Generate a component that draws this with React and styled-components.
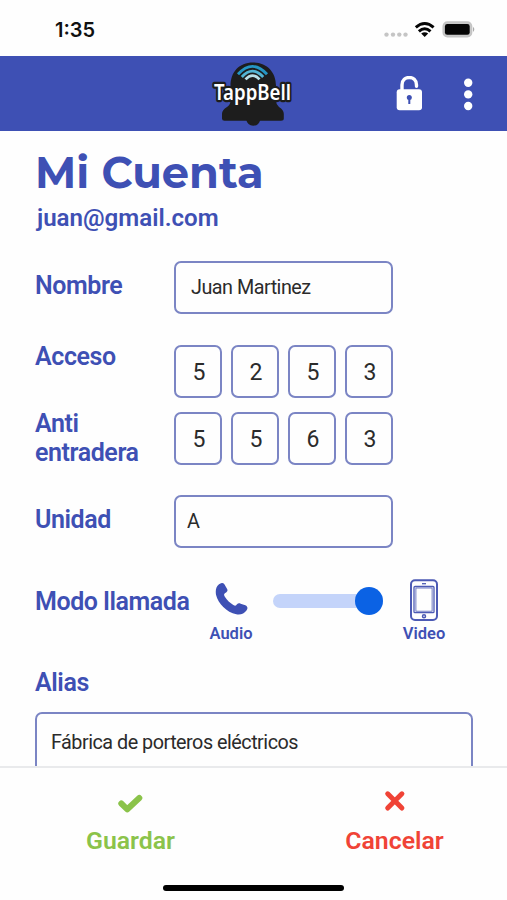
import React from "react";
import styled, { createGlobalStyle } from "styled-components";

const GlobalStyle = createGlobalStyle`
  * {
    box-sizing: border-box;
  }
  :root {
    --main-blue: #3e50b4;
    --border-blue: #7b85c4;
    --green: #8bc34a;
    --red: #f04336;
  }
  body {
    margin: 0;
    background: #fff;
    font-family: Roboto, "Liberation Sans", sans-serif;
  }
  h1, p {
    margin: 0;
  }
`;

const Screen = styled.div`
  width: 507px;
  height: 900px;
  display: flex;
  flex-direction: column;
  overflow: hidden;
  background: #fefefe;
`;
const StatusBar = styled.div`
  height: 56px;
  flex-shrink: 0;
  padding: 4px 31px 0 55px;
  display: flex;
  align-items: center;
  justify-content: space-between;
`;
const Time = styled.span`
  font-family: Inter, sans-serif;
  font-size: 20px;
  font-weight: 600;
  color: #111;
`;
const Header = styled.header`
  height: 75px;
  flex-shrink: 0;
  padding: 0 29px 0 205px;
  display: flex;
  align-items: center;
  background: var(--main-blue);
`;
const HeaderButtons = styled.div`
  margin-left: auto;
  display: flex;
  align-items: center;
  gap: 36px;
`;
const IconButton = styled.button`
  padding: 0;
  border: 0;
  background: none;
  display: flex;
`;
const Content = styled.main`
  flex: 1;
  min-height: 0;
  overflow: hidden;
  padding: 17px 34px 0 35px;
`;
const Title = styled.h1`
  height: 50px;
  line-height: 50px;
  font-family: Montserrat, Inter, sans-serif;
  font-size: 43.2px;
  font-weight: 700;
  color: var(--main-blue);
`;
const Email = styled.p`
  height: 28px;
  margin: 6px 0 29px 2px;
  line-height: 29px;
  font-size: 24.1px;
  font-weight: 600;
  color: var(--main-blue);
`;
const Row = styled.div`
  display: grid;
  grid-template-columns: 139px 219px;
  height: 53px;
  margin-bottom: ${({ $gap }) => $gap}px;
`;
const Label = styled.label`
  display: block;
  margin-top: ${({ $top }) => $top || 0}px;
  line-height: 29px;
  font-size: 25px;
  font-weight: 600;
  letter-spacing: -0.42px;
  white-space: nowrap;
  color: var(--main-blue);
`;
const Input = styled.input`
  width: 100%;
  height: 53px;
  padding: 0 ${({ $pad }) => $pad}px;
  border: 2px solid var(--border-blue);
  border-radius: 7px;
  background: #fefefe;
  outline: none;
  font-family: inherit;
  font-size: 19.8px;
  letter-spacing: -0.5px;
  color: #2b2b2b;
`;
const Digits = styled.div`
  display: flex;
  gap: 9px;
`;
const Digit = styled.input`
  width: 48px;
  height: 53px;
  padding: 2px 0 0 2px;
  border: 2px solid var(--border-blue);
  border-radius: 7px;
  background: #fefefe;
  outline: none;
  font-family: inherit;
  font-size: 23px;
  text-align: center;
  color: #2b2b2b;
`;
const CallMode = styled.div`
  display: flex;
  height: 68px;
  padding-top: 1px;
  margin-bottom: 24px;
`;
const ModeLabel = styled(Label)`
  width: 169px;
`;
const Mode = styled.div`
  width: 54px;
  display: flex;
  flex-direction: column;
  align-items: center;
  justify-content: space-between;
`;
const ModeName = styled.span`
  line-height: 20px;
  font-size: 16.5px;
  font-weight: 600;
  color: var(--main-blue);
`;
const ModeIcon = styled.div`
  height: 46px;
  display: flex;
  align-items: center;
`;
const Track = styled.div`
  width: 110px;
  height: 14px;
  margin: 17px 14px 0 15px;
  border-radius: 7px;
  background: #c4d4fa;
  display: flex;
  align-items: center;
  justify-content: flex-end;
`;
const Thumb = styled.div`
  width: 28px;
  height: 28px;
  flex-shrink: 0;
  border-radius: 50%;
  background: #0b62e4;
`;
const AliasInput = styled(Input)`
  height: 59px;
  margin-top: 15px;
  border-bottom: 0;
  border-radius: 7px 7px 0 0;
`;
const Footer = styled.footer`
  height: 134px;
  flex-shrink: 0;
  border-top: 2px solid #e9eaec;
  padding-top: 21px;
  display: flex;
  flex-direction: column;
  align-items: center;
`;
const Actions = styled.div`
  width: 100%;
  padding: 0 46px 0 64px;
  display: flex;
  justify-content: space-between;
`;
const Action = styled.button`
  width: 133px;
  padding: 0;
  border: 0;
  background: none;
  display: flex;
  flex-direction: column;
  align-items: center;
  gap: 13px;
  line-height: 30px;
  font-family: inherit;
  font-size: 24.8px;
  font-weight: 600;
  color: var(${({ $color }) => $color});
`;
const HomeIndicator = styled.div`
  width: 181px;
  height: 6px;
  margin-top: 29px;
  border-radius: 3px;
  background: #000;
`;

const StatusIcons = () => (
  <svg width="92" height="20" viewBox="384 20 92 20">
    <g fill="#c5c5c5">
      <circle cx="386.5" cy="34.6" r="2.2" />
      <circle cx="393" cy="34.6" r="2.2" />
      <circle cx="399.3" cy="34.6" r="2.2" />
      <circle cx="405.5" cy="34.6" r="2.2" />
    </g>
    <g fill="none" stroke="#050505" strokeWidth="3">
      <path d="M415.8 27.4 Q424.7 19.7 433.6 27.4" />
      <path d="M418.9 31.3 Q424.7 26.2 430.5 31.3" />
    </g>
    <path d="M421.2 33.6 Q424.7 30.8 428.2 33.6 L424.7 36.9 Z" fill="#050505" />
    <rect x="443.2" y="22" width="28.4" height="14.8" rx="4.3" fill="#c9c9c9" stroke="#c4c4c4" strokeWidth="1.5" />
    <rect x="444.9" y="24" width="24.8" height="10.8" rx="2.4" fill="#050505" />
    <path d="M473 26.7 Q475.6 29.3 473 32 Z" fill="#aaa" />
  </svg>
);

const LogoSvg = styled.svg`
  overflow: visible;
`;

const Logo = () => (
  <LogoSvg width="96" height="70" viewBox="205 59 96 70">
    <g fill="#1d1d1d">
      <path d="M253 62.5 C239 62.5 230.5 72 230.5 86 V101 Q230.5 104.5 227 107 Q222 110 222 114 V118.5 Q222 120.7 224.5 120.7 H281 Q283.8 120.7 283.8 118.5 V114 Q283.8 110 279 107 Q276 104.5 276 101 V86 C276 72 267 62.5 253 62.5 Z" />
      <path d="M246 119 H260.5 Q259 125.8 253.2 125.8 Q247.5 125.8 246 119 Z" />
    </g>
    <g fill="none" strokeWidth="2.8">
      <path d="M238 74.3 Q252.5 58.5 267 74.3" stroke="#2596c4" />
      <path d="M241.8 77 Q252.5 65.3 263.2 77" stroke="#53b4d4" />
      <path d="M245.5 79.4 Q252.5 71.8 259.5 79.4" stroke="#b9dfe8" />
    </g>
    <text
      x="214"
      y="100.2"
      textLength="77"
      lengthAdjust="spacingAndGlyphs"
      fontFamily="Noto Sans, sans-serif"
      fontSize="21.5"
      fontWeight="600"
      fill="#fff"
      stroke="#1d1d1d"
      strokeWidth="4.5"
      strokeLinejoin="round"
      paintOrder="stroke"
    >
      TappBell
    </text>
  </LogoSvg>
);

const LockIcon = () => (
  <svg width="26" height="36" viewBox="396 76 26 36">
    <path d="M402 91 V85 C402 75 416.5 75 416.5 85 V86.2" fill="none" stroke="#fff" strokeWidth="3.4" strokeLinecap="round" />
    <rect x="396.7" y="89.2" width="25.4" height="21" rx="3" fill="#fff" />
    <circle cx="409.3" cy="97.4" r="2.5" fill="#3e50b4" />
    <rect x="408.3" y="98" width="2" height="6" fill="#3e50b4" />
  </svg>
);

const MenuIcon = () => (
  <svg width="20" height="34" viewBox="458 77 20 34">
    <g fill="#fff">
      <circle cx="468.2" cy="82.8" r="4.2" />
      <circle cx="468.2" cy="94.4" r="4.2" />
      <circle cx="468.2" cy="106" r="4.2" />
    </g>
  </svg>
);

const PhoneIcon = () => (
  <svg width="34" height="34" viewBox="42 39 102 102">
    <path
      d="M57 43 C64 37 71 38 74 44 L81 56 C84 61 82 65 77 68 C71 72 71 75 75 81 C81 91 90 99 100 105 C105 108 108 108 111 103 C114 99 118 99 122 101 L136 106 C143 109 144 115 140 121 C133 131 121 136 109 133 C80 126 54 101 48 74 C46 61 48 50 57 43 Z"
      fill="#3e50b4"
    />
  </svg>
);

const MobileIcon = () => (
  <svg width="28" height="42" viewBox="410 579 28 42">
    <g fill="none" stroke="#4c5ab4">
      <rect x="411" y="580.3" width="26" height="39.7" rx="4" strokeWidth="2" />
      <rect x="414" y="586.5" width="20" height="26.2" rx="1" strokeWidth="1.3" />
      <rect x="415.9" y="588" width="16.2" height="23.2" strokeWidth="0.8" />
      <path d="M422 583.7 H426" strokeWidth="1.3" />
      <circle cx="424" cy="616.3" r="1.5" strokeWidth="1.5" />
    </g>
  </svg>
);

const CheckIcon = () => (
  <svg width="26" height="24" viewBox="118 789 26 24">
    <path d="M121.3 803.5 L127.3 809.3 L139.3 798" fill="none" stroke="#8bc34a" strokeWidth="6" strokeLinecap="round" strokeLinejoin="round" />
  </svg>
);

const CancelIcon = () => (
  <svg width="24" height="24" viewBox="382.5 789 24 24">
    <path d="M387.2 793.8 L401.4 808 M401.4 793.8 L387.2 808" fill="none" stroke="#f04336" strokeWidth="5" strokeLinecap="round" />
  </svg>
);

function CodeRow({ label, code, gap }) {
  return (
    <Row $gap={gap}>
      <Label $top={-3}>{label}</Label>
      <Digits>
        {code.split("").map((digit, i) => (
          <Digit key={i} defaultValue={digit} maxLength={1} />
        ))}
      </Digits>
    </Row>
  );
}

export default function App() {
  return (
    <>
      <GlobalStyle />
      <Screen>
        <StatusBar>
          <Time>1:35</Time>
          <StatusIcons />
        </StatusBar>
        <Header>
          <Logo />
          <HeaderButtons>
            <IconButton><LockIcon /></IconButton>
            <IconButton><MenuIcon /></IconButton>
          </HeaderButtons>
        </Header>
        <Content>
          <Title>Mi Cuenta</Title>
          <Email>juan@gmail.com</Email>
          <Row $gap={31}>
            <Label $top={10}>Nombre</Label>
            <Input $pad={15} defaultValue="Juan Martinez" />
          </Row>
          <CodeRow label="Acceso" code="5253" gap={14} />
          <CodeRow label={<>Anti<br />entradera</>} code="5563" gap={30} />
          <Row $gap={28}>
            <Label $top={10}>Unidad</Label>
            <Input $pad={11} defaultValue="A" />
          </Row>
          <CallMode>
            <ModeLabel $top={10}>Modo llamada</ModeLabel>
            <Mode>
              <ModeIcon><PhoneIcon /></ModeIcon>
              <ModeName>Audio</ModeName>
            </Mode>
            <Track><Thumb /></Track>
            <Mode>
              <ModeIcon><MobileIcon /></ModeIcon>
              <ModeName>Video</ModeName>
            </Mode>
          </CallMode>
          <Label>Alias</Label>
          <AliasInput $pad={14} defaultValue="Fábrica de porteros eléctricos" />
        </Content>
        <Footer>
          <Actions>
            <Action $color="--green">
              <CheckIcon />
              Guardar
            </Action>
            <Action $color="--red">
              <CancelIcon />
              Cancelar
            </Action>
          </Actions>
          <HomeIndicator />
        </Footer>
      </Screen>
    </>
  );
}
